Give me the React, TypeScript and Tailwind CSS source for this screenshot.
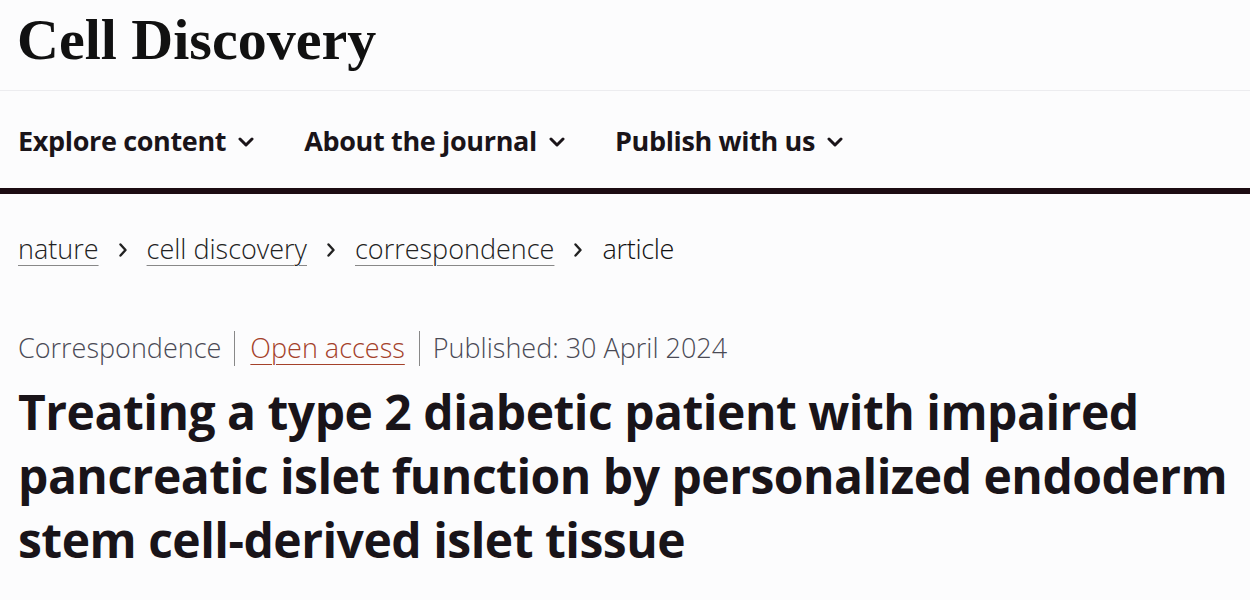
const navItems = ["Explore content", "About the journal", "Publish with us"];
const crumbs = ["nature", "cell discovery", "correspondence"];

const Caret = () => (
  <svg width="16" height="10" viewBox="0 0 16 10" fill="none" className="mt-[2px]">
    <polyline points="2,2 8,8 14,2" stroke="currentColor" strokeWidth="3" strokeLinecap="round" strokeLinejoin="round" />
  </svg>
);

const Sep = () => (
  <svg width="10" height="16" viewBox="0 0 10 16" fill="none" className="mt-[2px]">
    <polyline points="2.5,2.5 7.5,8 2.5,13.5" stroke="currentColor" strokeWidth="2.4" strokeLinecap="round" strokeLinejoin="round" />
  </svg>
);

export default function App() {
  return (
    <div className="w-[1250px] h-[600px] overflow-hidden bg-[#fcfcfd] text-[#1a1419] font-['Open_Sans',sans-serif]">
      {/* masthead */}
      <header className="h-[91px] border-b border-[#ececef] pl-[17px] pt-[4px]">
        <h1 className="font-['Liberation_Serif',serif] font-bold text-[58px] leading-[72px] text-[#111]">
          Cell Discovery
        </h1>
      </header>

      {/* main nav */}
      <nav className="h-[103px] border-b-[6px] border-[#1c0c12] flex items-center pl-[18px] gap-[50px] pt-[3px]">
        {navItems.map((item) => (
          <div key={item} className="flex items-center gap-[12px]">
            <span className="text-[27px] font-bold tracking-[-0.35px]">{item}</span>
            <Caret />
          </div>
        ))}
      </nav>

      <main className="pl-[18px]">
        {/* breadcrumbs */}
        <div className="flex items-center gap-[19px] mt-[35px] h-[40px] text-[27px] font-light text-[#222]">
          {crumbs.map((c) => (
            <div key={c} className="flex items-center gap-[19px]">
              <span className="underline decoration-[#888] decoration-1 underline-offset-[6px]">{c}</span>
              <Sep />
            </div>
          ))}
          <span className="text-[#111] tracking-[-0.3px]">article</span>
        </div>

        {/* article meta */}
        <div className="flex items-center mt-[59px] h-[40px] text-[27px] font-light text-[#4a4a55]">
          <span>Correspondence</span>
          <span className="ml-[13px] mr-[15px] w-px h-[35px] bg-[#888]" />
          <span className="text-[#a4412a] underline decoration-1 underline-offset-[6px]">Open access</span>
          <span className="ml-[14px] mr-[13px] w-px h-[35px] bg-[#888]" />
          <span>Published: 30 April 2024</span>
        </div>

        <h2 className="mt-[12px] text-[48px] leading-[64px] font-bold tracking-[-0.5px] text-[#191419] max-w-[1225px]">
          Treating a type 2 diabetic patient with impaired pancreatic islet function by personalized endoderm stem
          cell-derived islet tissue
        </h2>
      </main>
    </div>
  );
}
